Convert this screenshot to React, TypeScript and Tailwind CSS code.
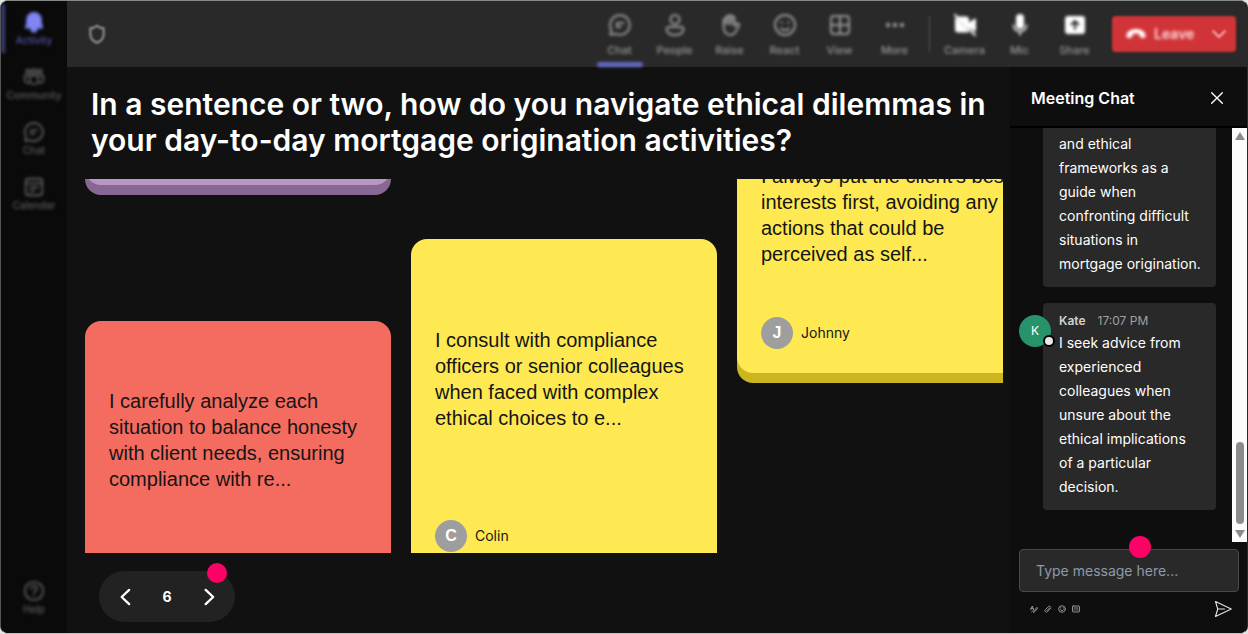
/**
 * Meeting window: app rail, call toolbar, question board and chat panel.
 *
 * - The rail and the toolbar are out of focus while the board is being presented.
 * - The board columns are scrolled, so the cards are cut by its edges.
 */

import type { ReactNode } from "react";

type Tone = "red" | "yellow";

type IconProps = { children: ReactNode; className?: string };

type CardProps = {
  tone: Tone;
  text: string;
  author?: string;
  className?: string;
};

// Card colours: face plus the thick lower edge.
const TONE_CLASS: Record<Tone, string> = {
  red: "bg-[#f46b60] shadow-[0_10px_0_#b84a41]",
  yellow: "bg-[#ffe953] shadow-[0_10px_0_#ccb521]",
};

// Common stroke icon on a 24px grid.
function Icon({ children, className = "size-6" }: IconProps) {
  return (
    <svg
      viewBox="0 0 24 24"
      fill="none"
      stroke="currentColor"
      strokeWidth="2"
      strokeLinecap="round"
      strokeLinejoin="round"
      className={className}
      aria-hidden="true"
    >
      {children}
    </svg>
  );
}

const chatShape = (
  <>
    <path d="M12 2.2a9.8 9.8 0 1 1-4.4 18.6L2.4 21.8l.9-5.1A9.8 9.8 0 0 1 12 2.2z" />
    <path d="M9 10h6.5M9 14h3.5M9 10v4" />
  </>
);

const RAIL_ITEMS = [
  {
    label: "Activity",
    icon: (
      <path
        fill="currentColor"
        d="M12 2a7.5 7.5 0 0 0-7.5 7.5V14L3 18h18l-1.500-4V9.500A7.500 7.500 0 0 0 12 2zM9 19.500a3 3 0 0 0 6 0z"
      />
    ),
  },
  {
    label: "Community",
    icon: (
      <>
        <circle cx="5.500" cy="6" r="2" />
        <circle cx="12" cy="6" r="2.500" />
        <circle cx="18.500" cy="6" r="2" />
        <path d="M7.500 10.500h9v5a4.500 4.500 0 0 1-9 0zM5.500 10.500H1.800v4a4 4 0 0 0 4.500 4M18.500 10.500h3.700v4a4 4 0 0 1-4.500 4" />
      </>
    ),
  },
  { label: "Chat", icon: chatShape },
  {
    label: "Calendar",
    icon: (
      <>
        <rect x="3" y="3" width="18" height="18" rx="3" />
        <path d="M3 8h18M8 12.500h8M8 16.500h4" />
      </>
    ),
  },
];

const VIEW_ACTIONS = [
  { label: "Chat", icon: chatShape },
  {
    label: "People",
    icon: (
      <>
        <circle cx="12" cy="6.500" r="4.500" />
        <path d="M5.500 14h13a2 2 0 0 1 2 2c0 3.500-3.500 6-8.500 6s-8.500-2.500-8.500-6a2 2 0 0 1 2-2z" />
      </>
    ),
  },
  {
    label: "Raise",
    icon: (
      <>
        <path d="M5.500 12V7a1.300 1.300 0 0 1 2.600 0V4.500a1.400 1.400 0 0 1 2.800 0V3.300a1.400 1.400 0 0 1 2.800 0v1.500a1.400 1.400 0 0 1 2.800 0V13l2.500-2.300c1-.8 2.600.3 2 1.500-1.400 3-3 9.800-8.500 9.800-4.800 0-7-3.500-7-10z" />
        <path d="M8.100 7v4M10.900 5v6M13.700 5v6" />
      </>
    ),
  },
  {
    label: "React",
    icon: (
      <>
        <circle cx="12" cy="12" r="10" />
        <path d="M8 15.500c2 2.300 6 2.300 8 0M8.700 9.500v.6M15.300 9.500v.6" />
      </>
    ),
  },
  {
    label: "View",
    icon: (
      <>
        <rect x="3" y="3" width="18" height="18" rx="3" />
        <path d="M12 3v18M3 12h18" />
      </>
    ),
  },
  {
    label: "More",
    icon: (
      <g fill="currentColor">
        <circle cx="5" cy="12" r="1.200" />
        <circle cx="12" cy="12" r="1.200" />
        <circle cx="19" cy="12" r="1.200" />
      </g>
    ),
  },
];

const DEVICE_ACTIONS = [
  {
    label: "Camera",
    icon: (
      <>
        <path fill="currentColor" d="M5.500 4.500H13a2 2 0 0 1 2 2v8.500zM3 6l12 12.500H5a2 2 0 0 1-2-2zM17 10l5-3.500v11L17 14z" />
        <path d="M2 2l20 20" />
      </>
    ),
  },
  {
    label: "Mic",
    icon: (
      <>
        <rect x="9" y="2" width="6" height="13" rx="3" fill="currentColor" />
        <path strokeWidth="1.500" d="M5.500 12a6.500 6.500 0 0 0 13 0M12 18.500V22" />
      </>
    ),
  },
  {
    label: "Share",
    icon: (
      <>
        <rect x="3" y="4" width="18" height="16" rx="2" fill="currentColor" />
        <path stroke="#292929" d="M12 16V8.500M8.500 11.500 12 8l3.500 3.500" />
      </>
    ),
  },
];

function Rail() {
  return (
    <nav className="flex w-[66px] shrink-0 flex-col bg-[#0a0a0a] pt-[3px] pb-[18px] text-[10px] leading-3 font-medium text-[#5c5c5c]">
      <div className="flex flex-1 flex-col blur-[1px]">
        {RAIL_ITEMS.map((item, index) => (
          <button
            key={item.label}
            type="button"
            className={`mb-[6px] flex h-[49px] flex-col items-center gap-px border-l-4 pt-[7px] pr-1 blur-[1px] ${
              index === 0 ? "border-[#3b3d78] text-[#5356a8]" : "border-transparent"
            }`}
          >
            <Icon className={index === 0 ? "size-[22px] text-[#7f85f5]" : "size-[22px]"}>
              {item.icon}
            </Icon>
            {item.label}
          </button>
        ))}
        <button type="button" className="mt-auto flex flex-col items-center gap-px blur-[1px]">
          <Icon className="size-[22px]">
            <circle cx="12" cy="12" r="10" />
            <path d="M9 9.500a3 3 0 1 1 4.500 2.500c-1 .6-1.500 1-1.500 2M12 17v.2" />
          </Icon>
          Help
        </button>
      </div>
    </nav>
  );
}

function Toolbar() {
  return (
    <header className="flex h-[66px] shrink-0 items-center bg-[#292929] pr-[11px] pl-5 text-[11px] leading-3 font-medium text-[#999]">
      <Icon className="size-5 blur-[1px]">
        <path
          strokeWidth="2.400"
          d="M12 2c2.500 2 5 3 8 3v7c0 5-3 8.500-8 10.500C7 20.500 4 17 4 12V5c3 0 5.500-1 8-3z"
        />
      </Icon>
      <div className="ml-auto flex h-full items-center blur-[1px]">
        {VIEW_ACTIONS.map((action, index) => (
          <button
            key={action.label}
            type="button"
            className="flex h-full w-[55px] flex-col items-center pt-3 blur-[1px]"
          >
            <Icon>{action.icon}</Icon>
            <span className="mt-[7px]">{action.label}</span>
            {index === 0 && <span className="mt-auto h-[5px] w-[46px] rounded-sm bg-[#6468c4]" />}
          </button>
        ))}
        <span className="mx-[7px] h-9 w-px bg-[#555]" />
        {DEVICE_ACTIONS.map((action) => (
          <button
            key={action.label}
            type="button"
            className="flex h-full w-[55px] flex-col items-center pt-3 blur-[1px]"
          >
            <Icon className="size-6 text-white">{action.icon}</Icon>
            <span className="mt-[7px]">{action.label}</span>
          </button>
        ))}
        <div className="ml-[10px] flex h-9 w-[124px] items-center rounded bg-[#d13438] text-[#ffdcdd]">
          <button
            type="button"
            className="flex flex-1 items-center gap-2 pl-[14px] text-sm font-semibold blur-[1px]"
          >
            <svg viewBox="0 0 20 12" className="h-3 w-5 text-white" fill="currentColor" aria-hidden="true">
              <path d="M10 1c5 0 9.500 2.500 9.500 6.500 0 1.500-.4 2.800-1.600 2.600l-3-.6c-.9-.2-1.400-.8-1.400-1.700V6C11.500 5.300 8.500 5.300 6.500 6v1.800c0 .9-.5 1.500-1.400 1.700l-3 .6C.9 10.300.5 9 .5 7.500.5 3.500 5 1 10 1z" />
            </svg>
            Leave
          </button>
          <button type="button" aria-label="Leave options" className="pr-2">
            <Icon className="size-[18px]">
              <path d="M4 8l8 8 8-8" />
            </Icon>
          </button>
        </div>
      </div>
    </header>
  );
}

function Card({ tone, text, author, className = "" }: CardProps) {
  return (
    <article
      className={`flex shrink-0 flex-col rounded-2xl p-6 text-[#151515] ${TONE_CLASS[tone]} ${className}`}
    >
      <p className="my-auto text-xl leading-[26px]">{text}</p>
      <footer className="mt-[26px] flex h-8 items-center gap-2 text-sm">
        {author && (
          <>
            <span className="grid size-8 place-items-center rounded-full bg-[#9e9e9e] text-base font-bold text-white">
              {author[0]}
            </span>
            <span className="font-[Inter,sans-serif]">{author}</span>
          </>
        )}
      </footer>
    </article>
  );
}

function Board() {
  return (
    <main className="flex min-w-0 flex-1 flex-col pt-[19px] pb-[11px] pl-[18px]">
      <h1 className="pl-[6px] text-[30px] leading-9 font-semibold text-white">
        In a sentence or two, how do you navigate ethical dilemmas in your day-to-day mortgage
        origination activities?
      </h1>

      <div className="mt-[21px] mr-[7px] flex min-h-0 flex-1 gap-5 overflow-hidden font-['Liberation_Sans',Arial,sans-serif]">
        <div className="flex w-[306px] shrink-0 flex-col gap-[136px]">
          <div className="-mt-10 h-[46px] shrink-0 rounded-2xl bg-[#b897c6] shadow-[0_10px_0_#886892]" />
          <Card
            tone="red"
            className="h-[295px]"
            text="I carefully analyze each situation to balance honesty with client needs, ensuring compliance with re..."
          />
        </div>
        <div className="flex w-[306px] shrink-0 flex-col pt-[60px]">
          <Card
            tone="yellow"
            className="h-[337px]"
            author="Colin"
            text="I consult with compliance officers or senior colleagues when faced with complex ethical choices to e..."
          />
        </div>
        <div className="flex w-[306px] shrink-0 flex-col">
          <Card
            tone="yellow"
            className="-mt-[65px] h-[259px]"
            author="Johnny"
            text="I always put the client's best interests first, avoiding any actions that could be perceived as self..."
          />
        </div>
      </div>

      <div className="relative mt-[18px] ml-[14px] flex h-[51px] w-[136px] shrink-0 items-center justify-between rounded-full bg-[#222] px-4 text-white">
        <button type="button" aria-label="Previous">
          <Icon className="size-5">
            <path strokeWidth="2.800" d="M17 3.500 8 12l9 8.500" />
          </Icon>
        </button>
        <span className="text-sm font-bold">6</span>
        <button type="button" aria-label="Next">
          <Icon className="size-5">
            <path strokeWidth="2.800" d="m8 3.500 9 8.500-9 8.500" />
          </Icon>
        </button>
        <span className="absolute -top-2 right-2 size-5 rounded-full bg-[#ff0066]" />
      </div>
    </main>
  );
}

function ChatPanel() {
  return (
    <aside className="flex w-[237px] shrink-0 flex-col bg-[#0e0e0e] text-sm text-white">
      <div className="flex h-[61px] shrink-0 items-center justify-between border-b-2 border-black pt-[2px] pr-[22px] pl-[21px]">
        <h2 className="text-base font-semibold">Meeting Chat</h2>
        <button type="button" aria-label="Close chat">
          <Icon className="size-4">
            <path d="M4 4l16 16M20 4 4 20" />
          </Icon>
        </button>
      </div>

      <div className="flex min-h-0 flex-1">
        <div className="flex flex-1 flex-col justify-end gap-4 overflow-hidden pr-4 pb-8 pl-[33px] leading-6">
          <p className="shrink-0 rounded bg-[#292929] pt-8 pr-[15px] pb-[11px] pl-4">
            and ethical frameworks as a guide when confronting difficult situations in mortgage
            origination.
          </p>
          <div className="relative shrink-0 rounded bg-[#292929] pt-2 pr-[15px] pb-[11px] pl-4">
            <div className="flex gap-3 text-xs leading-5 text-[#a0a0a0]">
              <span className="font-semibold text-[#d2d2d2]">Kate</span>
              <time>17:07 PM</time>
            </div>
            <p>
              I seek advice from experienced colleagues when unsure about the ethical implications
              of a particular decision.
            </p>
            <span className="absolute top-3 -left-6 grid size-8 place-items-center rounded-full bg-[#27936a] text-xs">
              K
            </span>
            <span className="absolute top-8 left-0 size-3 rounded-full border-2 border-black bg-[#e8e8e8]" />
          </div>
        </div>

        {/* Scrollbar, near the end of the conversation */}
        <div className="flex w-[15px] flex-col items-center bg-[#fcfcfc] py-1 text-[#8b8b8b]">
          <svg viewBox="0 0 10 8" className="h-2 w-[10px]" fill="currentColor" aria-hidden="true">
            <path d="M5 0l5 8H0z" />
          </svg>
          <span className="mt-auto mb-[6px] h-[82px] w-2 rounded-full bg-[#8b8b8b]" />
          <svg viewBox="0 0 10 8" className="h-2 w-[10px]" fill="currentColor" aria-hidden="true">
            <path d="M0 0h10L5 8z" />
          </svg>
        </div>
      </div>

      <form className="relative shrink-0 pt-[7px] pr-2 pb-[15px] pl-[9px]">
        <input
          type="text"
          aria-label="Message"
          placeholder="Type message here..."
          className="block h-[43px] w-full rounded border border-[#484848] bg-[#292929] px-4 placeholder:text-[#8d9aaa]"
        />
        <span className="absolute -top-[6px] left-[119px] size-[22px] rounded-full bg-[#ff0066]" />
        <div className="mt-2 flex h-[18px] items-center gap-[6px] pr-[7px] pl-[11px] text-[#aaa]">
          <button type="button" aria-label="Format">
            <Icon className="size-2">
              <path strokeWidth="2.500" d="M2 14 7 3l4 11M3 10h6M11 22l2-6 8-9 2 3-8 9zM5 20l4-3" />
            </Icon>
          </button>
          <button type="button" aria-label="Attach">
            <Icon className="size-2">
              <path strokeWidth="2.500" d="m9 17 9-10c2-3-2-6-4-3L4 14c-4 5 2 10 6 6L21 9" />
            </Icon>
          </button>
          <button type="button" aria-label="Emoji">
            <Icon className="size-2">
              <circle cx="12" cy="12" r="10" strokeWidth="2.500" />
              <path strokeWidth="2.500" d="M7 14c2 4 8 4 10 0M8 8v1M16 8v1" />
            </Icon>
          </button>
          <button type="button" aria-label="GIF">
            <Icon className="size-2">
              <rect x="1.500" y="3" width="21" height="18" rx="2" strokeWidth="2.500" />
              <path strokeWidth="2.500" d="M6 9h12M6 15h3M13 15h5" />
            </Icon>
          </button>
          <button type="submit" aria-label="Send" className="ml-auto text-[#e2e2e2]">
            <Icon className="size-[18px]">
              <path strokeWidth="1.500" d="M2 2l21 10L2 22l3-10zM5 12h9" />
            </Icon>
          </button>
        </div>
      </form>
    </aside>
  );
}

export default function App() {
  return (
    <div className="h-screen bg-[#e4e6e4] font-[Inter,sans-serif]">
      <div className="flex h-full overflow-hidden rounded-lg border border-t-[#858885] border-r-[#2b2b2b] border-b-[#c4c4c4] border-l-[#555] bg-[#111]">
        <Rail />
        <div className="flex min-w-0 flex-1 flex-col">
          <Toolbar />
          <div className="flex min-h-0 flex-1">
            <Board />
            <ChatPanel />
          </div>
        </div>
      </div>
    </div>
  );
}
